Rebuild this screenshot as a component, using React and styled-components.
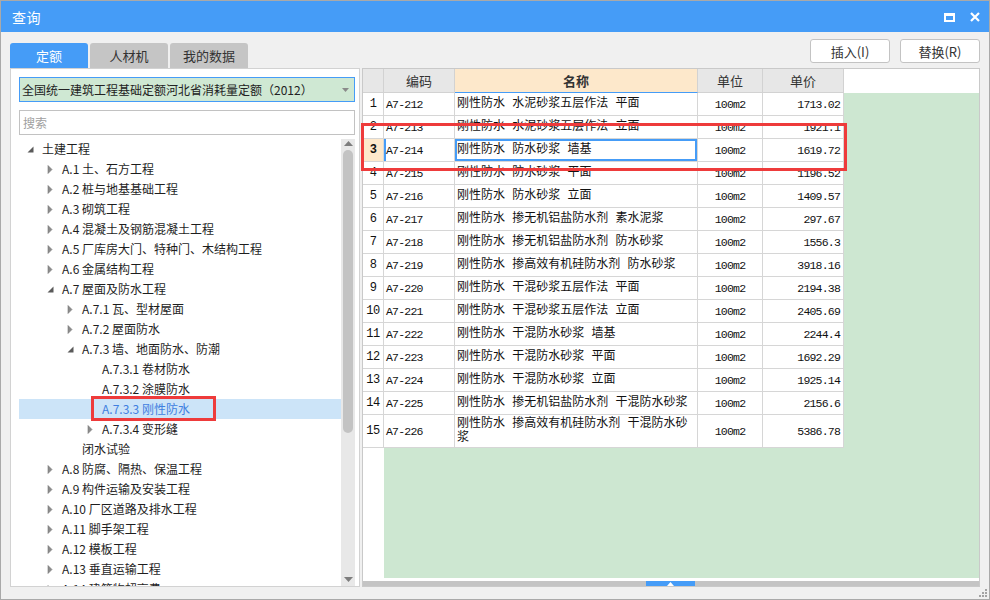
import React from 'react';
import styled, { createGlobalStyle } from 'styled-components';

const BLUE = '#459cf7';
const GREEN = '#cde7d1';

const GlobalStyle = createGlobalStyle`
  html, body { margin: 0; padding: 0; background: #fff; }
  body { font-family: "Noto Sans CJK SC", "Noto Sans", sans-serif; }
  * { box-sizing: border-box; }
`;

const treeItems = [
  { level: 0, state: 'open', text: '土建工程' },
  { level: 1, state: 'closed', text: 'A.1 土、石方工程' },
  { level: 1, state: 'closed', text: 'A.2 桩与地基基础工程' },
  { level: 1, state: 'closed', text: 'A.3 砌筑工程' },
  { level: 1, state: 'closed', text: 'A.4 混凝土及钢筋混凝土工程' },
  { level: 1, state: 'closed', text: 'A.5 厂库房大门、特种门、木结构工程' },
  { level: 1, state: 'closed', text: 'A.6 金属结构工程' },
  { level: 1, state: 'open', text: 'A.7 屋面及防水工程' },
  { level: 2, state: 'closed', text: 'A.7.1 瓦、型材屋面' },
  { level: 2, state: 'closed', text: 'A.7.2 屋面防水' },
  { level: 2, state: 'open', text: 'A.7.3 墙、地面防水、防潮' },
  { level: 3, state: 'leaf', text: 'A.7.3.1 卷材防水' },
  { level: 3, state: 'leaf', text: 'A.7.3.2 涂膜防水' },
  { level: 3, state: 'leaf', text: 'A.7.3.3 刚性防水', selected: true },
  { level: 3, state: 'closed', text: 'A.7.3.4 变形缝' },
  { level: 2, state: 'leaf', text: '闭水试验' },
  { level: 1, state: 'closed', text: 'A.8 防腐、隔热、保温工程' },
  { level: 1, state: 'closed', text: 'A.9 构件运输及安装工程' },
  { level: 1, state: 'closed', text: 'A.10 厂区道路及排水工程' },
  { level: 1, state: 'closed', text: 'A.11 脚手架工程' },
  { level: 1, state: 'closed', text: 'A.12 模板工程' },
  { level: 1, state: 'closed', text: 'A.13 垂直运输工程' },
  { level: 1, state: 'closed', text: 'A.14 建筑物超高费' },
];

const rows = [
  ['A7-212', '刚性防水 水泥砂浆五层作法 平面', '1713.02'],
  ['A7-213', '刚性防水 水泥砂浆五层作法 立面', '1921.1'],
  ['A7-214', '刚性防水 防水砂浆 墙基', '1619.72'],
  ['A7-215', '刚性防水 防水砂浆 平面', '1196.52'],
  ['A7-216', '刚性防水 防水砂浆 立面', '1409.57'],
  ['A7-217', '刚性防水 掺无机铝盐防水剂 素水泥浆', '297.67'],
  ['A7-218', '刚性防水 掺无机铝盐防水剂 防水砂浆', '1556.3'],
  ['A7-219', '刚性防水 掺高效有机硅防水剂 防水砂浆', '3918.16'],
  ['A7-220', '刚性防水 干混砂浆五层作法 平面', '2194.38'],
  ['A7-221', '刚性防水 干混砂浆五层作法 立面', '2405.69'],
  ['A7-222', '刚性防水 干混防水砂浆 墙基', '2244.4'],
  ['A7-223', '刚性防水 干混防水砂浆 平面', '1692.29'],
  ['A7-224', '刚性防水 干混防水砂浆 立面', '1925.14'],
  ['A7-225', '刚性防水 掺无机铝盐防水剂 干混防水砂浆', '2156.6'],
  ['A7-226', '刚性防水 掺高效有机硅防水剂 干混防水砂浆', '5386.78'],
];

function Arrow({ state }) {
  if (state === 'open') {
    return (
      <svg width="7" height="7" viewBox="0 0 7 7">
        <path d="M6.5 0.5 L6.5 6.5 L0.5 6.5 Z" fill="#5a5a5a" />
      </svg>
    );
  }
  if (state === 'closed') {
    return (
      <svg width="6" height="9" viewBox="0 0 6 9">
        <path d="M1 0.5 L5 4.5 L1 8.5 Z" fill="#8c8c8c" stroke="#777" strokeWidth="0.6" />
      </svg>
    );
  }
  return null;
}

function App() {
  return (
    <>
      <GlobalStyle />
      <Window>
        <TitleBar>
          <Title>查询</Title>
          <TitleTools>
            <svg width="11" height="9" viewBox="0 0 11 9">
              <rect x="1" y="1" width="9" height="7" fill="none" stroke="#fff" strokeWidth="2" />
              <rect x="0" y="0" width="11" height="3" fill="#fff" />
            </svg>
            <svg width="10" height="10" viewBox="0 0 10 10">
              <path d="M1 1 L9 9 M9 1 L1 9" stroke="#fff" strokeWidth="2.2" />
            </svg>
          </TitleTools>
        </TitleBar>

        <Body>
          <Tabs>
            <Tab active>定额</Tab>
            <Tab>人材机</Tab>
            <Tab>我的数据</Tab>
          </Tabs>

          <Actions>
            <Button>插入(I)</Button>
            <Button>替换(R)</Button>
          </Actions>

          <LeftPanel>
            <Select>
              <span>全国统一建筑工程基础定额河北省消耗量定额（2012）</span>
              <svg width="7" height="4" viewBox="0 0 7 4">
                <path d="M0 0 L7 0 L3.5 4 Z" fill="#8a8a8a" />
              </svg>
            </Select>
            <Search placeholder="搜索" />
            <Tree>
              <TreeList>
                {treeItems.map((item) => (
                  <TreeRow key={item.text} level={item.level} selected={item.selected}>
                    <Toggle>
                      <Arrow state={item.state} />
                    </Toggle>
                    <TreeLabel selected={item.selected}>
                      {item.text}
                      {item.selected && <TreeMark />}
                    </TreeLabel>
                  </TreeRow>
                ))}
              </TreeList>
              <VScroll>
                <svg width="9" height="5" viewBox="0 0 9 5">
                  <path d="M0 5 L4.5 0 L9 5 Z" fill="#7d7d7d" />
                </svg>
                <VThumb />
                <VSpacer />
                <svg width="9" height="5" viewBox="0 0 9 5">
                  <path d="M0 0 L9 0 L4.5 5 Z" fill="#7d7d7d" />
                </svg>
              </VScroll>
            </Tree>
          </LeftPanel>

          <GridPanel>
            <HeaderRow>
              <HeadCell width={21} />
              <HeadCell width={71}>编码</HeadCell>
              <HeadCell width={243} active>名称</HeadCell>
              <HeadCell width={65}>单位</HeadCell>
              <HeadCell width={81}>单价</HeadCell>
              <HeadFill />
            </HeaderRow>
            <GridBody>
              {rows.map(([code, name, price], i) => {
                const selected = i === 2;
                return (
                  <Row key={code} tall={i === 14}>
                    <NumCell selected={selected}>{i + 1}</NumCell>
                    <CodeCell selected={selected}>{code}</CodeCell>
                    <NameCell selected={selected}>{name}</NameCell>
                    <UnitCell>100m2</UnitCell>
                    <PriceCell>{price}</PriceCell>
                  </Row>
                );
              })}
              <GridMark />
            </GridBody>
            <HScroll>
              <HThumb offset={283}>
                <svg width="7" height="4" viewBox="0 0 7 4">
                  <path d="M0 4 L3.5 0 L7 4 Z" fill="#fff" />
                </svg>
              </HThumb>
            </HScroll>
          </GridPanel>
        </Body>

        <Grip>
          <svg width="10" height="10" viewBox="0 0 10 10">
            <rect x="7" y="1" width="2" height="2" fill="#a3a3a3" />
            <rect x="4" y="4" width="2" height="2" fill="#a3a3a3" />
            <rect x="7" y="4" width="2" height="2" fill="#a3a3a3" />
            <rect x="1" y="7" width="2" height="2" fill="#a3a3a3" />
            <rect x="4" y="7" width="2" height="2" fill="#a3a3a3" />
            <rect x="7" y="7" width="2" height="2" fill="#a3a3a3" />
          </svg>
        </Grip>
      </Window>
    </>
  );
}

const Window = styled.div`
  position: relative;
  width: 990px;
  height: 600px;
  border: 1px solid #a9a9a9;
  display: flex;
  flex-direction: column;
  overflow: hidden;
  background: #f0f0f0;
`;

const TitleBar = styled.div`
  height: 31px;
  flex-shrink: 0;
  background: ${BLUE};
  display: flex;
  align-items: center;
  justify-content: space-between;
  padding: 0 9px 0 11px;
  color: #fff;
`;

const Title = styled.div`
  font-size: 14px;
  letter-spacing: 0.5px;
`;

const TitleTools = styled.div`
  display: flex;
  align-items: center;
  gap: 15px;
  padding-top: 1px;
`;

const Body = styled.div`
  flex: 1;
  display: grid;
  grid-template-columns: 350px 618px;
  grid-template-rows: 36px 519px;
  column-gap: 2px;
  padding: 0 9px;
`;

const Tabs = styled.div`
  display: flex;
  align-items: flex-end;
  gap: 2px;
`;

const Tab = styled.div`
  width: 78px;
  height: 25px;
  display: flex;
  align-items: center;
  justify-content: center;
  border-radius: 3px 3px 0 0;
  font-size: 13px;
  background: ${(p) => (p.active ? BLUE : '#c5c5c5')};
  color: ${(p) => (p.active ? '#fff' : '#333')};
`;

const Actions = styled.div`
  display: flex;
  justify-content: flex-end;
  align-items: flex-end;
  gap: 10px;
  padding-bottom: 5px;
`;

const Button = styled.div`
  width: 80px;
  height: 24px;
  display: flex;
  align-items: center;
  justify-content: center;
  background: #fff;
  border: 1px solid #c3c3c3;
  border-radius: 3px;
  font-size: 13px;
  color: #333;
`;

const LeftPanel = styled.div`
  background: #fff;
  border: 1px solid #d2d2d2;
  padding: 8px 4px 0 8px;
  display: flex;
  flex-direction: column;
  overflow: hidden;
`;

const Select = styled.div`
  height: 25px;
  flex-shrink: 0;
  margin-bottom: 8px;
  border: 1px solid ${BLUE};
  background: #cfe8d3;
  display: flex;
  align-items: center;
  justify-content: space-between;
  padding: 0 5px 0 2px;
  font-size: 12px;
  color: #222;
  white-space: nowrap;
`;

const Search = styled.input`
  height: 25px;
  flex-shrink: 0;
  margin-bottom: 4px;
  border: 1px solid #c2c2c2;
  outline: none;
  padding: 0 3px;
  font-family: "Noto Sans CJK SC", sans-serif;
  font-size: 12px;
  color: #222;
  &::placeholder {
    color: #a0a0a0;
  }
`;

const Tree = styled.div`
  flex: 1;
  min-height: 0;
  display: flex;
`;

const TreeList = styled.div`
  flex: 1;
  overflow: hidden;
`;

const TreeRow = styled.div`
  height: 20px;
  display: flex;
  align-items: center;
  padding-left: ${(p) => 3 + p.level * 20}px;
  background: ${(p) => (p.selected ? '#cce4f8' : 'transparent')};
`;

const Toggle = styled.div`
  width: 20px;
  height: 20px;
  flex-shrink: 0;
  display: flex;
  align-items: center;
  padding-left: 5px;
`;

const TreeLabel = styled.span`
  position: relative;
  line-height: 20px;
  font-size: 12px;
  white-space: nowrap;
  color: ${(p) => (p.selected ? '#3f7fe0' : '#1e1e1e')};
`;

const TreeMark = styled.span`
  position: absolute;
  top: -3px;
  bottom: -2px;
  left: -11px;
  right: -26px;
  border: 3px solid #ee3b3b;
`;

const VScroll = styled.div`
  width: 14px;
  flex-shrink: 0;
  background: #e8e8e8;
  display: flex;
  flex-direction: column;
  align-items: center;
  padding: 2px 0 4px;
`;

const VThumb = styled.div`
  width: 10px;
  height: 283px;
  margin-top: 4px;
  border-radius: 5px;
  background: #c3c3c3;
`;

const VSpacer = styled.div`
  flex: 1;
`;

const GridPanel = styled.div`
  background: #fff;
  border: 1px solid #c9c9c9;
  display: flex;
  flex-direction: column;
`;

const HeaderRow = styled.div`
  height: 24px;
  flex-shrink: 0;
  display: flex;
`;

const HeadCell = styled.div`
  width: ${(p) => p.width}px;
  flex-shrink: 0;
  display: flex;
  align-items: center;
  justify-content: center;
  background: ${(p) => (p.active ? '#fde8cb' : '#e7e7e7')};
  border-right: 1px solid #d2d2d2;
  border-bottom: 1px solid ${(p) => (p.active ? BLUE : '#d2d2d2')};
  font-size: 13px;
  font-weight: ${(p) => (p.active ? 700 : 400)};
  color: #333;
`;

const HeadFill = styled.div`
  flex: 1;
  background: #fff;
`;

const GridBody = styled.div`
  position: relative;
  flex: 1;
  display: flex;
  flex-direction: column;
  align-items: flex-start;
  background: linear-gradient(to right, #fff 21px, ${GREEN} 21px);
`;

const Row = styled.div`
  display: flex;
  height: ${(p) => (p.tall ? 33 : 23)}px;
  background: #fff;
  border-bottom: 1px solid #d6d6d6;
`;

const Cell = styled.div`
  flex-shrink: 0;
  display: flex;
  align-items: center;
  border-right: 1px solid #d6d6d6;
  color: #111;
`;

const NumCell = styled(Cell)`
  width: 21px;
  justify-content: center;
  font-family: "Liberation Mono", monospace;
  font-size: 12px;
  letter-spacing: -0.5px;
  font-weight: ${(p) => (p.selected ? 700 : 400)};
  background: ${(p) => (p.selected ? '#fde8cb' : '#fff')};
`;

const MonoCell = styled(Cell)`
  font-family: "Liberation Mono", monospace;
  font-size: 11.5px;
  letter-spacing: -0.8px;
`;

const CodeCell = styled(MonoCell)`
  width: 71px;
  padding-left: 2px;
  box-shadow: ${(p) => (p.selected ? `inset 2px 0 0 ${BLUE}` : 'none')};
`;

const NameCell = styled(Cell)`
  width: 243px;
  padding: 0 3px 0 2px;
  font-family: "Liberation Mono", "Noto Sans CJK SC", monospace;
  font-size: 12px;
  line-height: 14px;
  box-shadow: ${(p) => (p.selected ? `inset 0 0 0 2px ${BLUE}` : 'none')};
`;

const UnitCell = styled(MonoCell)`
  width: 65px;
  justify-content: center;
`;

const PriceCell = styled(MonoCell)`
  width: 81px;
  justify-content: flex-end;
  padding-right: 3px;
`;

const GridMark = styled.div`
  position: absolute;
  z-index: 2;
  top: 30px;
  left: -2px;
  width: 486px;
  height: 48px;
  border: 3px solid #ee3b3b;
  pointer-events: none;
`;

const HScroll = styled.div`
  height: 5px;
  flex-shrink: 0;
  margin-top: 3px;
  background: #c4c4c4;
  display: flex;
`;

const HThumb = styled.div`
  width: 49px;
  margin-left: ${(p) => p.offset}px;
  background: ${BLUE};
  display: flex;
  align-items: flex-end;
  justify-content: center;
`;

const Grip = styled.div`
  position: absolute;
  right: 1px;
  bottom: 1px;
  display: flex;
`;

export default App;
